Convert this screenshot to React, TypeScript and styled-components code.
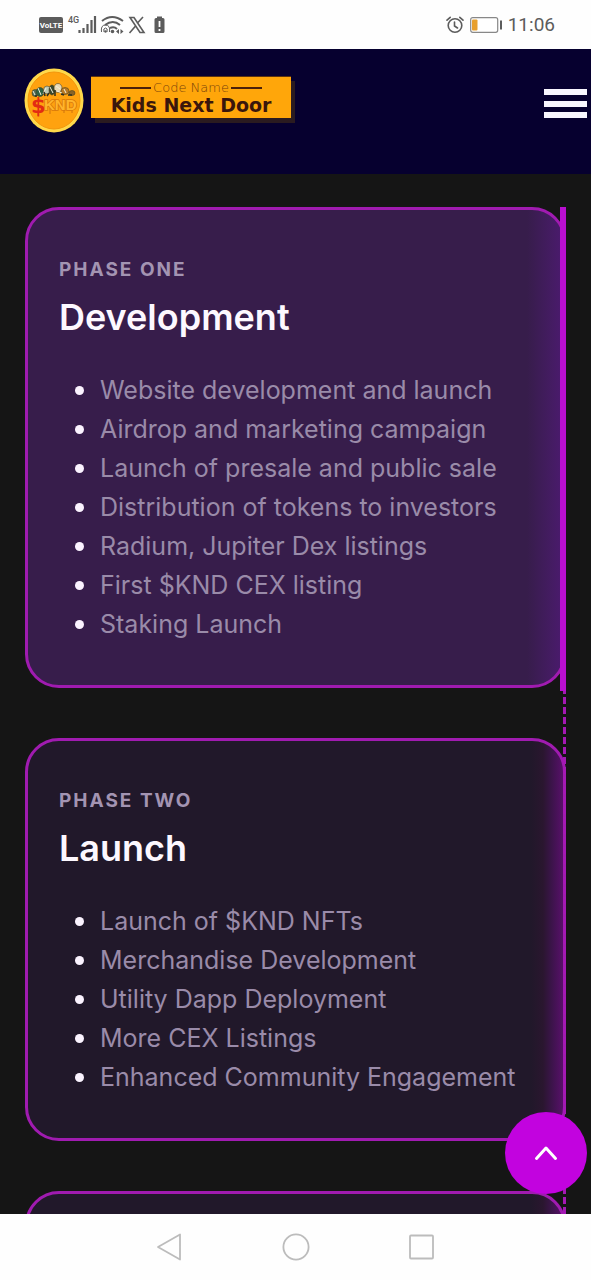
import React from 'react';
import styled, { createGlobalStyle } from 'styled-components';

const GlobalStyle = createGlobalStyle`
  *, *::before, *::after { box-sizing: border-box; }
  body { margin: 0; background: #151515; font-family: Inter, 'Liberation Sans', sans-serif; }
  ul, h2, p { margin: 0; padding: 0; }
  button { border: 0; padding: 0; background: none; cursor: pointer; }
`;

const Screen = styled.div`
  display: flex;
  flex-direction: column;
  height: 100vh;
  overflow: hidden;
`;

const StatusBar = styled.div`
  display: flex;
  flex: none;
  align-items: center;
  justify-content: space-between;
  height: 49px;
  padding: 0 36px 0 38px;
  background: #fefefe;
  color: #5c5c5c;
`;

const StatusGroup = styled.div<{ $gap: number }>`
  display: flex;
  align-items: center;
  gap: ${({ $gap }) => $gap}px;
  svg { display: block; }
`;

const Clock = styled.span`
  font: 400 19px/24px Roboto, sans-serif;
`;

const Header = styled.header`
  display: flex;
  flex: none;
  align-items: flex-start;
  justify-content: space-between;
  height: 125px;
  padding: 19px 4px 0 24px;
  background: #06002f;
`;

const Brand = styled.a`
  display: flex;
  align-items: flex-start;
  gap: 7px;
  text-decoration: none;
`;

const Banner = styled.span`
  display: flex;
  flex-direction: column;
  align-items: center;
  width: 200px;
  height: 42px;
  margin-top: 8px;
  padding-top: 3px;
  background: #ffa60a;
  border-top: 1px solid #5a3210;
  box-shadow: 4px 5px 0 #2a1b20;
  color: #3a160c;
  white-space: nowrap;
`;

const BannerTop = styled.span`
  display: flex;
  align-items: center;
  gap: 2px;
  font: 200 13px/15px 'DejaVu Sans', sans-serif;
  color: #7a430a;
  &::before, &::after {
    content: '';
    width: 31px;
    height: 2px;
    background: #4b210a;
  }
`;

const BannerName = styled.span`
  font: 700 19px/20px 'DejaVu Sans', sans-serif;
`;

const MenuButton = styled.button`
  display: flex;
  flex-direction: column;
  justify-content: space-between;
  width: 43px;
  height: 29px;
  margin-top: 21px;
`;

const MenuLine = styled.span`
  height: 6px;
  background: #f8f6ff;
`;

const Main = styled.main`
  position: relative;
  flex: 1;
  min-height: 0;
  overflow: hidden;
  padding: 33px 25px 0;
  background: #151515;
`;

const Timeline = styled.div`
  position: relative;
  display: flex;
  flex-direction: column;
  gap: 50px;
  &::after {
    content: '';
    position: absolute;
    top: 0;
    bottom: 0;
    right: 0;
    width: 3px;
    background: repeating-linear-gradient(#a518b5 0 7px, transparent 7px 10px);
  }
`;

const Card = styled.section<{ $active?: boolean }>`
  position: relative;
  padding: 46px 31px 41px;
  border: 3px solid #a01bb0;
  border-radius: 34px;
  background: ${({ $active }) =>
    $active
      ? 'linear-gradient(to left, #4b1a6e 0, #431c60 14px, #371d4b 36px)'
      : 'linear-gradient(to left, #58106a 0, #3a1448 12px, #2a162f 20px, #21182a 32px)'};
  &::after {
    content: '';
    display: ${({ $active }) => ($active ? 'block' : 'none')};
    position: absolute;
    z-index: 1;
    top: -3px;
    bottom: -6px;
    right: -3px;
    width: 6px;
    background: #b90fd0;
  }
`;

const Phase = styled.p`
  font-size: 19px;
  line-height: 28px;
  font-weight: 700;
  letter-spacing: 2px;
  color: #a394b2;
`;

const Title = styled.h2`
  margin-top: 10px;
  font-size: 36px;
  line-height: 46px;
  font-weight: 600;
  color: #fdf8ff;
`;

const Items = styled.ul`
  margin-top: 31px;
  padding-left: 41px;
  list-style: none;
`;

const Item = styled.li`
  position: relative;
  font-size: 25px;
  font-weight: 400;
  line-height: 39px;
  color: #9a8ba9;
  white-space: nowrap;
  &::before {
    content: '';
    position: absolute;
    left: -25px;
    top: 15px;
    width: 9px;
    height: 9px;
    border-radius: 50%;
    background: #fbf3ff;
  }
`;

const TopButton = styled.button`
  position: absolute;
  z-index: 2;
  right: 4px;
  bottom: 20px;
  display: grid;
  place-items: center;
  width: 82px;
  height: 82px;
  border-radius: 50%;
  background: #c203df;
`;

const NavBar = styled.nav`
  display: flex;
  flex: none;
  justify-content: center;
  align-items: center;
  gap: 98px;
  height: 66px;
  background: #fefefe;
  button { width: 28px; height: 28px; }
  svg { display: block; }
`;

const phases = [
  {
    phase: 'PHASE ONE',
    title: 'Development',
    active: true,
    items: [
      'Website development and launch',
      'Airdrop and marketing campaign',
      'Launch of presale and public sale',
      'Distribution of tokens to investors',
      'Radium, Jupiter Dex listings',
      'First $KND CEX listing',
      'Staking Launch',
    ],
  },
  {
    phase: 'PHASE TWO',
    title: 'Launch',
    items: [
      'Launch of $KND NFTs',
      'Merchandise Development',
      'Utility Dapp Deployment',
      'More CEX Listings',
      'Enhanced Community Engagement',
    ],
  },
  { items: [] },
];

const StatusIcons = () => (
  <svg width="128" height="22" viewBox="0 0 128 22" fill="none" stroke="#5c5c5c" aria-label="Signal status">
    <rect x="1" y="3" width="24" height="16" rx="2" fill="#5c5c5c" stroke="none" />
    <text x="13" y="14" textAnchor="middle" fontFamily="Roboto" fontWeight="700" fontSize="8" fill="#fff" stroke="none">VoLTE</text>
    <text x="30" y="9" fontFamily="Roboto" fontWeight="500" fontSize="9" fill="#5c5c5c" stroke="none">4G</text>
    <path d="M41.500 19v-3M45.500 19v-5M49.500 19V10M53.500 19V6M57 19V2" strokeWidth="2.200" />
    <path d="M64 7q10-8 21 0M67 11q8-6 15 0M72 14q4-2 7 1" strokeWidth="2" />
    <path d="M63.500 18q-1-7 4-7t4 7M66 18q-1-4 1.500-4t1.500 4" strokeWidth="1" />
    <circle cx="67.500" cy="17.500" r="1.200" fill="#5c5c5c" stroke="none" />
    <circle cx="74.500" cy="17.500" r="1.800" fill="#5c5c5c" stroke="none" />
    <path d="M81 15l-3 2.500 3 2.500zM82.500 15l3 2.500-3 2.500z" fill="#5c5c5c" stroke="none" />
    <path d="M92 3.500h4l10 15h-4zM105 3l-6 6.500M98 11.500L91.500 19" strokeWidth="1.600" />
    <path d="M119 4V2.500h5V4h1q1.500 0 1.500 1.500v12q0 1.500-1.500 1.500h-7q-1.500 0-1.500-1.500v-12Q116.500 4 118 4z" fill="#5c5c5c" stroke="none" />
    <path d="M121.500 7v6M121.500 15v2" stroke="#fff" strokeWidth="1.800" />
  </svg>
);

const AlarmIcon = () => (
  <svg width="18" height="18" viewBox="0 0 18 18" fill="none" stroke="#5c5c5c" strokeWidth="1.600" strokeLinecap="round">
    <circle cx="9" cy="9.500" r="6.800" />
    <path d="M8.500 6v4l3 2M1 4.200L4.200 1.300M17 4.200L13.800 1.300" />
  </svg>
);

const BatteryIcon = () => (
  <svg width="32" height="16" viewBox="0 0 32 16">
    <rect x=".7" y=".7" width="27" height="14.600" rx="2" fill="#fff" stroke="#888" strokeWidth="1.200" />
    <rect x="2" y="2.500" width="5.500" height="11" rx="1" fill="#e8a02e" />
    <rect x="30" y="3.500" width="2" height="9" fill="#5c5c5c" />
  </svg>
);

const Coin = () => (
  <svg width="60" height="66" viewBox="0 0 60 66" aria-hidden="true">
    <ellipse cx="30" cy="32.500" rx="29.500" ry="32" fill="#ffd84a" />
    <ellipse cx="30" cy="32.500" rx="26" ry="28.500" fill="#ffa20f" stroke="#f2960d" />
    <g stroke="#4b4221" strokeWidth=".6">
      <ellipse cx="11" cy="25" rx="3" ry="3.500" fill="#54715c" />
      <ellipse cx="16" cy="24" rx="4" ry="4.500" fill="#2e6244" />
      <ellipse cx="23" cy="22" rx="3.500" ry="4" fill="#bfc9b2" />
      <ellipse cx="28" cy="22" rx="3" ry="5" fill="#39472c" />
      <ellipse cx="34" cy="20" rx="4" ry="4.500" fill="#e9d9b5" />
      <ellipse cx="41" cy="23" rx="4" ry="3.500" fill="#ba7a24" />
      <ellipse cx="48" cy="25" rx="3" ry="2.500" fill="#8a6427" />
    </g>
    <path d="M9 23l2 4M14 20l3 7M19 26l3-6M26 19l3 6M32 18l4 3M33 23l5 2M40 21l2 4" stroke="#f4f0dc" strokeWidth="1" />
    <path d="M12 27v2M20 24l1 4M25 25l-2 3M31 22v6M37 26l3 1M44 27h4" stroke="#2d2f20" strokeWidth="1.500" />
    <path d="M14 44v4M26 40v6M40 40v5M48 40v5" stroke="#e0820f" strokeWidth="1.500" />
    <text x="7" y="45" fontFamily="DejaVu Sans" fontWeight="700" fontSize="21" fill="#e32b13">$</text>
    <text x="20" y="42" fontFamily="Liberation Sans" fontWeight="700" fontSize="15" fill="#ffb52c" stroke="#d9780b" strokeWidth="1.600" paintOrder="stroke">KND</text>
  </svg>
);

export default function App() {
  return (
    <Screen>
      <GlobalStyle />
      <StatusBar>
        <StatusGroup $gap={0}>
          <StatusIcons />
        </StatusGroup>
        <StatusGroup $gap={6}>
          <AlarmIcon />
          <BatteryIcon />
          <Clock>11:06</Clock>
        </StatusGroup>
      </StatusBar>
      <Header>
        <Brand href="#">
          <Coin />
          <Banner>
            <BannerTop>Code Name</BannerTop>
            <BannerName>Kids Next Door</BannerName>
          </Banner>
        </Brand>
        <MenuButton aria-label="Open menu">
          <MenuLine />
          <MenuLine />
          <MenuLine />
        </MenuButton>
      </Header>
      <Main>
        <Timeline>
          {phases.map(({ phase, title, active, items }, index) => (
            <Card key={index} $active={active}>
              {phase && <Phase>{phase}</Phase>}
              {title && <Title>{title}</Title>}
              {items.length > 0 && (
                <Items>
                  {items.map((item) => (
                    <Item key={item}>{item}</Item>
                  ))}
                </Items>
              )}
            </Card>
          ))}
        </Timeline>
        <TopButton aria-label="Back to top">
          <svg width="24" height="16" viewBox="0 0 24 16" fill="none" stroke="#fff" strokeWidth="3" strokeLinecap="round" strokeLinejoin="round">
            <path d="M2.500 13.500L12 3l9.500 10.500" />
          </svg>
        </TopButton>
      </Main>
      <NavBar aria-label="System navigation">
        <button aria-label="Back">
          <svg width="28" height="28" viewBox="0 0 28 28" fill="none" stroke="#bcbcbc" strokeWidth="1.800" strokeLinejoin="round">
            <path d="M24 1.500v25L2 14z" />
          </svg>
        </button>
        <button aria-label="Home">
          <svg width="28" height="28" viewBox="0 0 28 28" fill="none" stroke="#bcbcbc" strokeWidth="1.800">
            <circle cx="14" cy="14" r="12.600" />
          </svg>
        </button>
        <button aria-label="Recent apps">
          <svg width="28" height="28" viewBox="0 0 28 28" fill="none" stroke="#bcbcbc" strokeWidth="1.800">
            <rect x="2" y="2.500" width="23" height="23" rx="1" />
          </svg>
        </button>
      </NavBar>
    </Screen>
  );
}
